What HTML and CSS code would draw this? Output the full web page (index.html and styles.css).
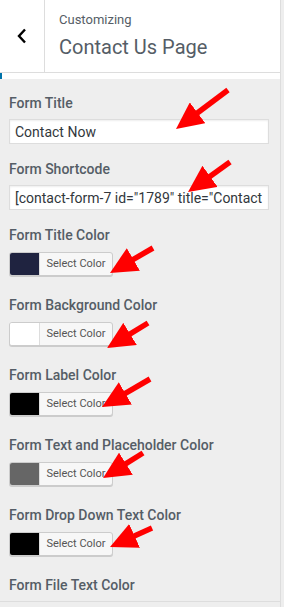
FILE: index.html
```html
<!DOCTYPE html>
<html lang="en">
<head>
    <meta charset="UTF-8">
    <meta name="viewport" content="width=device-width, initial-scale=1.0">
    <title>Customizing Contact Us Page</title>
    <link rel="stylesheet" href="styles.css">
</head>
<body>
    <div class="panel">
        <div class="header">
            <button class="back" type="button" aria-label="Back">
                <svg width="12" height="16" viewBox="0 0 12 16">
                    <path d="M9 1.5 L3 8 L9 14.5" fill="none" stroke="#000" stroke-width="2.4"/>
                </svg>
            </button>
            <div class="title-wrap">
                <span class="subtitle">Customizing</span>
                <h1>Contact Us Page</h1>
            </div>
        </div>
        <div class="notice"></div>

        <ul class="controls">
            <li class="control text-control">
                <label>Form Title</label>
                <input type="text" value="Contact Now">
            </li>
            <li class="control text-control">
                <label>Form Shortcode</label>
                <input type="text" value='[contact-form-7 id="1789" title="Contact Now"]'>
            </li>
            <li class="control color-control">
                <label>Form Title Color</label>
                <button class="color-btn" type="button"><span class="swatch swatch-navy"></span><span class="color-text">Select Color</span></button>
            </li>
            <li class="control color-control">
                <label>Form Background Color</label>
                <button class="color-btn" type="button"><span class="swatch swatch-white"></span><span class="color-text">Select Color</span></button>
            </li>
            <li class="control color-control">
                <label>Form Label Color</label>
                <button class="color-btn" type="button"><span class="swatch swatch-black"></span><span class="color-text">Select Color</span></button>
            </li>
            <li class="control color-control">
                <label>Form Text and Placeholder Color</label>
                <button class="color-btn" type="button"><span class="swatch swatch-grey"></span><span class="color-text">Select Color</span></button>
            </li>
            <li class="control color-control">
                <label>Form Drop Down Text Color</label>
                <button class="color-btn" type="button"><span class="swatch swatch-black"></span><span class="color-text">Select Color</span></button>
            </li>
            <li class="control last-control">
                <label>Form File Text Color</label>
            </li>
        </ul>
    </div>

    <!-- annotation arrows drawn over the screenshot -->
    <svg class="arrows" width="284" height="607" viewBox="0 0 284 607">
        <defs>
            <marker id="head" markerUnits="userSpaceOnUse" markerWidth="28" markerHeight="26" refX="7" refY="13" orient="auto">
                <path d="M0 0 L27 13 L0 26 Z" fill="#f00"/>
            </marker>
        </defs>
        <g stroke="#f00" stroke-width="5.5" marker-end="url(#head)">
            <line x1="228" y1="90" x2="192" y2="117"/>
            <line x1="230" y1="162" x2="204.3" y2="180.4"/>
            <line x1="153" y1="248" x2="127.3" y2="262.9"/>
            <line x1="148" y1="323" x2="124.1" y2="337.6"/>
            <line x1="150" y1="379" x2="119.3" y2="396.9"/>
            <line x1="143" y1="453" x2="120" y2="467.4"/>
            <line x1="152" y1="528" x2="128.2" y2="538.8"/>
        </g>
    </svg>
</body>
</html>
```

FILE: styles.css
```css
* {
    margin: 0;
    padding: 0;
    box-sizing: border-box;
}

body {
    font-family: Roboto, "Liberation Sans", sans-serif;
    background: #eee;
    color: #555d66;
    width: 284px;
    height: 607px;
    overflow: hidden;
    position: relative;
}

.panel {
    width: 281px;
    min-height: 607px;
    border-right: 1px solid #ddd;
}

.header {
    display: flex;
    height: 73px;
    background: #fff;
    border-bottom: 1px solid #ddd;
}

.back {
    width: 45px;
    border: none;
    border-right: 1px solid #ddd;
    background: #fff;
    display: flex;
    align-items: center;
    justify-content: center;
    padding-bottom: 1px;
}

.title-wrap {
    padding: 12px 0 0 14px;
}

.subtitle {
    display: block;
    font-size: 13px;
    line-height: 16px;
}

.title-wrap h1 {
    font-size: 20px;
    line-height: 24px;
    font-weight: 400;
    margin-top: 7px;
}

.notice {
    height: 6px;
    background: #fff;
    border-left: 2px solid #0073aa;
}

.controls {
    list-style: none;
    padding: 15px 0 0 9px;
    border-bottom: 1px solid #ddd;
}

.control label {
    display: block;
    font-size: 14px;
    line-height: 18px;
    font-weight: 500;
    color: #555d66;
}

.text-control {
    margin-bottom: 16px;
}

.text-control label {
    margin-bottom: 7px;
}

.text-control input {
    display: block;
    width: 260px;
    height: 25px;
    border: 1px solid #ddd;
    background: #fff;
    box-shadow: inset 0 1px 2px rgba(0, 0, 0, 0.07);
    padding: 0 5px;
    font-family: Roboto, "Liberation Sans", sans-serif;
    font-size: 14px;
    color: #32373c;
    overflow: hidden;
}

.color-control {
    margin-bottom: 20px;
}

.color-control label {
    margin-bottom: 8px;
}

.color-btn {
    display: flex;
    width: 104px;
    height: 24px;
    border: 1px solid #ccc;
    border-radius: 3px;
    box-shadow: 0 1px 0 #ccc;
    background: #f7f7f7;
    overflow: hidden;
    font-family: Roboto, "Liberation Sans", sans-serif;
}

.swatch {
    width: 30px;
    height: 100%;
    border-right: 1px solid #ddd;
}

.swatch-navy {
    background: #1f2340;
}

.swatch-white {
    background: #fff;
}

.swatch-black {
    background: #000;
}

.swatch-grey {
    background: #666;
}

.color-text {
    flex: 1;
    font-size: 11px;
    line-height: 22px;
    color: #555;
    text-align: center;
}

.last-control {
    padding-bottom: 7px;
}

.arrows {
    position: absolute;
    top: 0;
    left: 0;
    pointer-events: none;
}
```
